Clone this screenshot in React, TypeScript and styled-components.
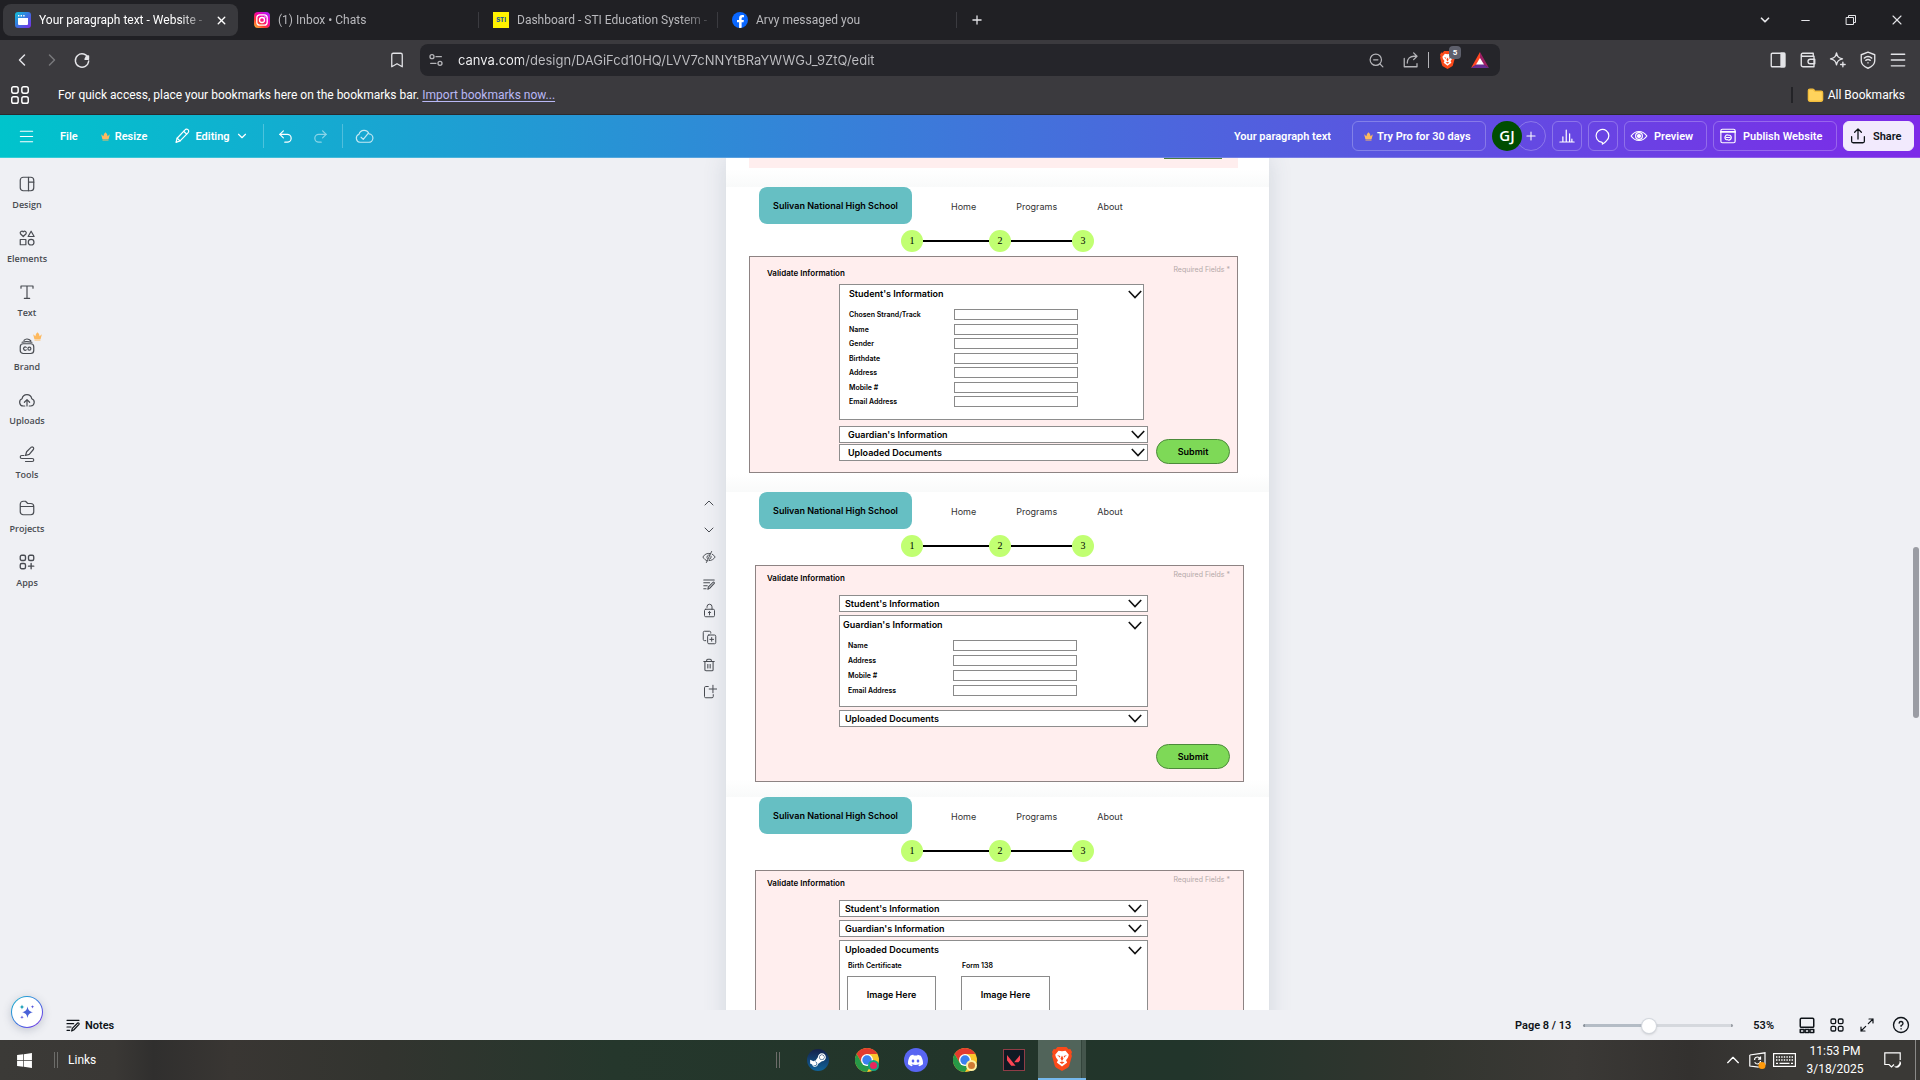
import React from 'react';
import styled, { createGlobalStyle, css } from 'styled-components';
import {
  Bookmark, ChevronDown, ChevronLeft, ChevronRight, ChevronUp, Folder, Menu, Minus, Plus,
  Redo2, Trash2, Undo2, X, ZoomOut,
} from 'lucide-react';
import { SiDiscord, SiValorant } from 'react-icons/si';
import { FaFacebookF, FaSteamSymbol, FaWindows } from 'react-icons/fa';

const chromeFont = 'Roboto, "Open Sans", sans-serif';
const canvaFont = 'Roboto, "Noto Sans", sans-serif';
const designFont = 'Inter, "Liberation Sans", sans-serif';

const Global = createGlobalStyle`
  *, *::before, *::after { box-sizing: border-box; }
  body { margin: 0; font-family: ${chromeFont}; background: #eff0f4; overflow: hidden; }
  button { border: 0; background: none; padding: 0; margin: 0; font: inherit; color: inherit; cursor: pointer; }
  input { font: inherit; margin: 0; }
  a { color: inherit; text-decoration: none; }
  svg { display: block; flex: none; }
`;

/* ---------- icons ---------- */

type IconProps = { size?: number; width?: number; height?: number; box?: string; weight?: number; children: React.ReactNode };
const Icon = ({ size = 18, width, height, box = '0 0 24 24', weight = 1.6, children }: IconProps) => (
  <svg width={width ?? size} height={height ?? size} viewBox={box} fill="none" stroke="currentColor"
    strokeWidth={weight} strokeLinecap="round" strokeLinejoin="round" aria-hidden="true">{children}</svg>
);

const Crown = ({ size = 9 }: { size?: number }) => (
  <svg width={size} height={size} viewBox="0 0 12 12" fill="#fdb95f" aria-hidden="true">
    <path d="M0.200 3 3.200 5.800 4 2.600 6 0.200 8 2.600 8.800 5.800 11.800 3 10.200 9.200H1.800ZM2 10h8v1.400H2Z" />
  </svg>
);

const Reload = () => (
  <Icon size={20} weight={1.7}><path d="M19.6 10A8 8 0 1 0 20 13.2" /><path d="M19.8 7.2v4h-4.2l1.6-3.4Z" fill="currentColor" /></Icon>
);
const SiteInfo = () => (
  <Icon size={16} weight={2}><circle cx="6" cy="7" r="3" /><path d="M12 7h8M4 17h8" /><circle cx="18" cy="17" r="3" /></Icon>
);
const ShareArrow = () => (
  <Icon size={18} weight={1.7}><path d="M3 10v11h17v-4" /><path d="M7 16c0-6 4-9 9-9h3M15.500 2.500 20 7l-4.500 4.500" /></Icon>
);
const SidePanel = () => (
  <Icon size={18} weight={1.8}><rect x="3" y="3" width="18" height="18" rx="1.500" /><path d="M16 3h5v18h-5Z" fill="currentColor" /></Icon>
);
const Wallet = () => (
  <Icon size={18} weight={1.8}><path d="M3 5v13.500A2.500 2.500 0 0 0 5.500 21H20V7H5a2 2 0 0 1-2-2c0-1 .8-2 2-2h14v4" /><path d="M21 11h-6a3 3 0 0 0 0 6h6Z" /></Icon>
);
const Sparkle = () => (
  <Icon size={18} weight={1.8}><path d="M10 2.500c1 5 2.500 6.500 8 8-5.500 1.500-7 3-8 8-1-5-2.500-6.500-8-8 5.500-1.500 7-3 8-8ZM18.500 15v6M15.500 18h6" /></Icon>
);
const Vpn = () => (
  <Icon size={18} weight={1.8}><path d="M12 1.500 21 5v8c0 5-4 8-9 10-5-2-9-5-9-10V5Z" /><path d="M7 9.500c3-2.500 7-2.500 10 0M9 12.500c2-1.500 4-1.500 6 0M12 15.500v.4" /></Icon>
);
const Bat = () => (
  <svg width="18" height="16" viewBox="0 0 18 16" aria-hidden="true">
    <path d="M9 0 0 16 9 10.500Z" fill="#ff4724" /><path d="M9 0 18 16 9 10.500Z" fill="#9e1f63" />
    <path d="M0 16h18L9 10Z" fill="#662d91" /><path d="M9 6 5 12.500h8Z" fill="#fff" />
  </svg>
);
const BraveLion = ({ width, height }: { width: number; height: number }) => (
  <svg width={width} height={height} viewBox="0 0 20 24" preserveAspectRatio="none" aria-hidden="true">
    <path d="M5.500 0h9l2 2.300 1.800-.3L20 5l-.7 2 .6 2-2.600 9.600a4 4 0 0 1-1.600 2.200L10 24l-5.700-3.200a4 4 0 0 1-1.600-2.200L.1 9l.6-2L0 5l1.700-3 1.800.3Z" fill="#fb4a1a" />
    <path d="M10 4.300 13.500 3.800 16.800 7.800 16 10.500l-2 2.800 1.200 2.200-5.200 4-5.200-4L6 13.300l-2-2.800L3.200 7.800 6.500 3.800Z" fill="#fff" />
    <path d="m5.200 8 3 1-.2 1.800ZM14.800 8l-3 1 .2 1.800ZM8.500 11.500 10 14l1.500-2.500L10 8.500ZM7.500 15.300 10 14.600l2.500.7L10 17Z" fill="#fb4a1a" />
  </svg>
);
const Grid4 = ({ size = 18, plus = false, weight = 2 }: { size?: number; plus?: boolean; weight?: number }) => (
  <Icon size={size} weight={weight}>
    <rect x="3" y="3" width="7" height="7" rx="2" /><rect x="14" y="3" width="7" height="7" rx="2" />
    <rect x="3" y="14" width="7" height="7" rx="2" />
    {plus ? <path d="M17.500 14v7M14 17.500h7" /> : <rect x="14" y="14" width="7" height="7" rx="2" />}
  </Icon>
);
const Pencil = () => (
  <Icon size={18}><path d="M4 20.500 5.500 15 16 3.800a2.400 2.400 0 0 1 4.200 3.700L9.500 18.500Z" /><path d="m14.500 6 3.700 3.500M5.500 15l4 3.500" /></Icon>
);
const NotesIcon = ({ size = 16 }: { size?: number }) => (
  <Icon size={size} weight={1.8}><path d="M3 5h18M3 10h10M3 15h6M3 20h4" /><path d="m10 21 1-4 8-8c1-1 3 .8 2 2l-8 8.500Z" /></Icon>
);
const CloudCheck = () => (
  <Icon size={20} weight={1.4}><path d="M7 19.500a5 5 0 0 1-1-9.600A6.300 6.300 0 0 1 18 9.500a5 5 0 0 1-.6 10Z" /><path d="m8.500 13.500 2.600 2.500L17 8.800" /></Icon>
);
const ChartIcon = () => (
  <Icon size={18}><path d="M2.500 20h19M6.500 20v-7M11 20V4M15.500 20V9M18.500 20v-4" /></Icon>
);
const Bubble = () => (
  <Icon size={18}><path d="M10 20.200A8.500 8.500 0 1 1 16.500 18.500C15 20.500 13 22 11 22.800c.6-1 .6-2-1-2.600Z" /></Icon>
);
const Eye = () => (
  <Icon size={18}><path d="M1.500 12C7 4 17 4 22.500 12 17 20 7 20 1.500 12Z" /><circle cx="12" cy="12" r="4.500" /><circle cx="12" cy="12" r="2" fill="currentColor" /></Icon>
);
const WebsiteIcon = () => (
  <Icon size={18}><rect x="2.500" y="3" width="19" height="18" rx="2" /><path d="M2.500 6.500h19" strokeWidth="2.400" /><path d="M12.500 11a3 3 0 1 0-2.500 6h1M11.500 17a3 3 0 1 0 3-6H13" /><path d="M9.500 14h5" /></Icon>
);
const Upload = () => (
  <Icon size={18} weight={1.7}><path d="M3.500 13v6a2 2 0 0 0 2 2h13a2 2 0 0 0 2-2v-6M12 16V3M7.500 7 12 2.500 16.500 7" /></Icon>
);
const DesignIcon = () => (<Icon><rect x="3" y="3" width="18" height="18" rx="4" /><path d="M14 3v18M14 9.500h7" /></Icon>);
const ElementsIcon = () => (
  <Icon><path d="M7 10 3.200 6.300a2.300 2.300 0 0 1 3.800-2.500 2.300 2.300 0 0 1 3.800 2.500ZM17.500 3 21.500 10h-8ZM3 14h7.500v7H3Z" /><circle cx="17.500" cy="17.500" r="3.800" /></Icon>
);
const TextIcon = () => (<Icon><path d="M4 7V4h16v3M12 4v16.500M8.500 20.500h7" /></Icon>);
const BrandIcon = () => (
  <Icon><rect x="3" y="9" width="18" height="13" rx="4" /><path d="M5.500 7c3-1 9-1 13 0M8 4.500C10 2 14 2 17 5" /><path d="M11 13.800a2.200 2.200 0 1 0 0 3.400" /><circle cx="15.200" cy="15.500" r="2" /></Icon>
);
const UploadsIcon = () => (
  <Icon><path d="M9 20H7a5 5 0 0 1-1.500-9.700 6.500 6.500 0 0 1 12.800 0A5 5 0 0 1 17 20h-2M12 20v-8M8.500 15 12 11.500l3.500 3.500" /></Icon>
);
const ToolsIcon = () => (
  <Icon><path d="m10 14 1.500-5L17 3.500a2 2 0 0 1 3.500 2.500L15 12.500Z" /><path d="M8 14H5a2 2 0 0 0 0 4h14a1.500 1.500 0 0 1 0 4h-9" /></Icon>
);
const ProjectsIcon = () => (
  <Icon><path d="M3 7a4 4 0 0 1 4-4h3l3 3h4a4 4 0 0 1 4 4v7a4 4 0 0 1-4 4H7a4 4 0 0 1-4-4ZM3 10h18" /></Icon>
);
const HideIcon = () => (
  <Icon size={14}><path d="M9 18.500C6 17.500 3.500 15.500 1.500 12 4.500 7 9 5 14 6M17.500 7.200c2 1 3.600 2.600 5 4.800-2.500 4-6 6.200-10.500 6.200M16.500 2.500 7.500 21.500M13 8.500a4 4 0 0 0-4 6M15.500 10.500a4 4 0 0 1-3 5.500" /></Icon>
);
const LockIcon = () => (
  <Icon size={15}><rect x="4" y="10" width="16" height="12" rx="2" /><path d="M8 7V6a4 4 0 0 1 8 0v4M12 19v-5M10 15.500l2-2 2 2" /></Icon>
);
const CopyIcon = () => (
  <Icon size={15}><path d="M6 17H4a2 2 0 0 1-2-2V4a2 2 0 0 1 2-2h8a2 2 0 0 1 2 2v1" /><rect x="9" y="8" width="13" height="14" rx="2" /><path d="M15.500 12v6M12.500 15h6" /></Icon>
);
const AddPageIcon = () => (
  <Icon size={15}><path d="M10 4H6a2 2 0 0 0-2 2v14a2 2 0 0 0 2 2h10a2 2 0 0 0 2-2v-3M17.500 2v12M11.500 8h12" /></Icon>
);
const PagesIcon = () => (
  <Icon size={18} weight={2}><rect x="3" y="3" width="18" height="12" rx="1.500" /><rect x="3" y="18" width="5" height="4" /><rect x="9.500" y="18" width="5" height="4" /><rect x="16" y="18" width="5" height="4" /></Icon>
);
const ExpandIcon = () => (
  <Icon size={16} weight={1.8}><path d="M15 3h6v6M21 3l-7 7M9 21H3v-6M3 21l7-7" /></Icon>
);
const HelpIcon = () => (
  <Icon size={18} weight={1.8}><circle cx="12" cy="12" r="10" /><path d="M9.500 9.500a2.600 2.600 0 1 1 2.600 3v1.300M12.100 17v.2" /></Icon>
);
const AiStars = () => (
  <svg width="16" height="16" viewBox="0 0 16 16" aria-hidden="true">
    <path d="M8.500 2.500c.8 3.800 1.900 4.900 5.500 5.700-3.600.8-4.700 1.900-5.500 5.700-.8-3.800-1.900-4.900-5.500-5.700 3.600-.8 4.700-1.900 5.500-5.700Z" fill="#4a62d8" />
    <path d="M3 .4c.4 1.700.9 2.200 2.600 2.600C3.900 3.400 3.400 3.900 3 5.600 2.600 3.900 2.100 3.400.4 3 2.100 2.600 2.600 2.100 3 .4Z" fill="#1ba0b8" />
    <path d="M13.500 1c.3 1.200.6 1.500 1.800 1.800-1.200.3-1.500.6-1.800 1.800-.3-1.200-.6-1.500-1.800-1.800 1.200-.3 1.500-.6 1.800-1.800ZM3 11.400c.3 1.200.6 1.500 1.800 1.800-1.200.3-1.500.6-1.800 1.800-.3-1.200-.6-1.500-1.800-1.800 1.200-.3 1.500-.6 1.800-1.800Z" fill="#5a58dd" />
  </svg>
);
const Caret = () => (
  <svg width="14" height="9" viewBox="0 0 14 9" fill="none" stroke="#111" strokeWidth="1.600" aria-hidden="true"><path d="m.8 1 6.200 6.600L13.200 1" /></svg>
);
const CanvaFav = () => (
  <svg width="16" height="16" viewBox="0 0 16 16" aria-hidden="true">
    <defs><linearGradient id="cf" x1="0" y1="0" x2="1" y2="1"><stop stopColor="#10c5d8" /><stop offset=".5" stopColor="#3b72df" /><stop offset="1" stopColor="#7d2ae8" /></linearGradient></defs>
    <rect width="16" height="16" rx="3" fill="url(#cf)" /><path d="M3 6h10v6a1 1 0 0 1-1 1H4a1 1 0 0 1-1-1Z" fill="#fff" /><path d="M3 3.800h1.400M5.600 3.800H7M8.200 3.800h1.400" stroke="#fff" strokeWidth="1.400" />
  </svg>
);
const InstaFav = () => (
  <svg width="16" height="16" viewBox="0 0 16 16" fill="none" aria-hidden="true">
    <defs><linearGradient id="ig" x1="0" y1="1" x2=".8" y2="0"><stop stopColor="#ffc83a" /><stop offset=".35" stopColor="#ff3a2e" /><stop offset=".65" stopColor="#f500a8" /><stop offset="1" stopColor="#b31cf5" /></linearGradient></defs>
    <rect width="16" height="16" rx="4" fill="url(#ig)" /><rect x="2.800" y="2.800" width="10.400" height="10.400" rx="3" stroke="#fff" strokeWidth="1.300" />
    <circle cx="8" cy="8" r="2.500" stroke="#fff" strokeWidth="1.300" /><circle cx="11" cy="5" r=".7" fill="#fff" />
  </svg>
);
const Chrome = () => (
  <svg width="24" height="24" viewBox="0 0 24 24" aria-hidden="true">
    <circle cx="12" cy="12" r="12" fill="#fcc62d" /><path d="M12 0a12 12 0 0 1 10.400 6H12l-5.200 9L1.600 6A12 12 0 0 1 12 0Z" fill="#e33b2e" />
    <path d="M1.600 6a12 12 0 0 0 10.400 18l5.200-9H6.800Z" fill="#279847" /><circle cx="12" cy="12" r="6" fill="#fff" /><circle cx="12" cy="12" r="4.700" fill="#3b80ee" />
  </svg>
);
const TraySync = () => (
  <svg width="17" height="17" viewBox="0 0 17 17" fill="none" stroke="#fff" strokeWidth="1.200" aria-hidden="true">
    <path d="M.8 3 16 .8v12M.8 3v11l9 1.200M5.500 8c0-2 1.500-3 3-3s2.200.8 2.800 1.800M11.500 4.500v2.600H9M11.500 9c0 2-1.500 3-3 3s-2.200-.8-2.800-1.800" /><circle cx="13" cy="13.500" r="3.500" fill="#ff9a0a" stroke="none" />
  </svg>
);
const Keyboard = () => (
  <svg width="23" height="14" viewBox="0 0 23 14" fill="none" stroke="#fff" aria-hidden="true">
    <rect x=".6" y=".6" width="21.800" height="12.800" strokeWidth="1.200" /><path d="M3 4h17M3 7h17" strokeDasharray="1.400 1.200" strokeWidth="1.400" /><path d="M3 10.300h2M6.500 10.300h10M18 10.300h2" strokeWidth="1.200" />
  </svg>
);
const ActionCenter = () => (
  <svg width="17" height="17" viewBox="0 0 17 17" fill="none" stroke="#fff" strokeWidth="1.200" aria-hidden="true">
    <path d="M10 12.500 7.500 15 5 12.500H.8V.8h15.400V8" /><path d="M15.500 8.500a4 4 0 1 1-5.500 6 5 5 0 0 0 5.500-6Z" fill="#fff" stroke="none" />
  </svg>
);

/* ---------- browser chrome ---------- */

const Screen = styled.div`height: 100vh; display: flex; flex-direction: column; overflow: hidden;`;
const TabStrip = styled.div`
  height: 40px; flex: none; display: flex; align-items: center; padding: 0 3px; background: #202024; color: #b9b9bd; font-size: 12px;
`;
const Tab = styled.div<{ $active?: boolean }>`
  width: 235px; height: 32px; padding: 0 4px 0 12px; border-radius: 8px; display: flex; align-items: center; gap: 8px;
  ${p => p.$active && css`background: #39393d; color: #fff; padding-right: 10px;`}
`;
const TabTitle = styled.span`
  flex: 1; white-space: nowrap; overflow: hidden; mask-image: linear-gradient(90deg, #000 84%, transparent 102%);
`;
const TabRule = styled.i<{ $hidden?: boolean }>`
  width: 1px; height: 16px; margin: 0 2px 0 1px; background: ${p => (p.$hidden ? 'transparent' : '#3b3b40')};
`;
const StiFav = styled.span`
  width: 16px; height: 16px; background: #fff200; color: #16579b; font: 800 6px/16px ${designFont}; text-align: center; flex: none;
`;
const FbFav = styled.span`
  width: 16px; height: 16px; border-radius: 50%; background: #0866ff; color: #fff; display: flex; justify-content: center; align-items: flex-end; overflow: hidden; flex: none;
`;
const ChromeButton = styled.button<{ $w?: number; $dim?: boolean }>`
  width: ${p => p.$w ?? 30}px; height: 28px; display: flex; align-items: center; justify-content: center; flex: none;
  color: ${p => (p.$dim ? '#78787c' : '#e4e4e8')};
`;
const Spacer = styled.span`flex: 1;`;
const NavBar = styled.div`
  height: 40px; flex: none; display: flex; align-items: center; background: #3b3a3e; padding: 0 7px; color: #e4e4e8;
`;
const NavSide = styled.div<{ $end?: boolean }>`
  flex: 1; display: flex; align-items: center; justify-content: ${p => (p.$end ? 'flex-end' : 'flex-start')};
`;
const AddressBar = styled.div`
  width: 1080px; height: 32px; border-radius: 8px; background: #25252a; display: flex; align-items: center; padding: 0 11px 0 8px; gap: 14px; color: #b4b4b8;
`;
const Url = styled.input`
  flex: 1; min-width: 0; border: 0; outline: 0; padding: 0; font: 13px/20px Inter, sans-serif; color: transparent;
  background: linear-gradient(90deg, #f6f6f8 65px, #bfbfc3 65px); background-clip: text; -webkit-background-clip: text;
`;
const AddressTool = styled.button`width: 20px; height: 20px; display: flex; align-items: center;`;
const AddressRule = styled.i`width: 1px; height: 16px; background: #b4b4b8; margin: 0 -6px;`;
const ShieldButton = styled.button`position: relative; width: 20px; height: 22px; display: flex; align-items: center; justify-content: center;`;
const ShieldCount = styled.span`
  position: absolute; top: -3px; left: 12px; width: 12px; height: 13px; border-radius: 4px; background: #5e606c; color: #fff; font: 700 8px/13px ${chromeFont}; text-align: center;
`;
const BookmarkBar = styled.div`
  height: 35px; flex: none; background: #3b3a3e; border-bottom: 1px solid #2b2a2e; display: flex; align-items: center; padding: 0 15px 4px 9px; color: #fff; font-size: 12px;
`;
const BookmarkHint = styled.span`margin-left: 27px;`;
const ImportLink = styled.a`margin-left: 3px; color: #b9b8f5; text-decoration: underline; text-underline-offset: 2px;`;
const BookmarkRule = styled.i`width: 2px; height: 16px; background: #232327; margin-right: 14px;`;
const AllBookmarks = styled.button`display: flex; align-items: center; gap: 4px;`;

/* ---------- editor bar ---------- */

const EditorBar = styled.header`
  height: 43px; flex: none; display: flex; align-items: center; padding: 0 6px 0 16px; color: #fff; font: 600 11px/14px ${canvaFont};
  background: linear-gradient(90deg, #00c4cc, #7d2ae8); border-bottom: 1px solid rgba(255, 255, 255, 0.2);
`;
const BarButton = styled.button<{ $gap?: number; $before?: number; $opacity?: number }>`
  display: flex; align-items: center; gap: ${p => p.$gap ?? 5}px; margin-left: ${p => p.$before ?? 0}px; opacity: ${p => p.$opacity ?? 1};
`;
const BarText = styled.span`padding-top: 1px;`;
const BarRule = styled.i<{ $before: number }>`width: 1px; height: 24px; background: rgba(255, 255, 255, 0.25); margin-left: ${p => p.$before}px;`;
const DocTitle = styled.input`
  width: 102px; margin-right: 15px; border: 0; padding: 1px 0 0; outline: 0; background: none; color: #fff; font: 600 11px/14px ${canvaFont}; text-align: right;
`;
const PillButton = styled.button<{ $w: number; $solid?: boolean; $left?: number; $gap?: number }>`
  width: ${p => p.$w}px; height: 30px; margin-left: 6px; border-radius: 6px; border: 1px solid ${p => (p.$solid ? '#f2eafd' : 'rgba(255,255,255,.25)')};
  display: flex; align-items: center; gap: ${p => p.$gap ?? 6}px; white-space: nowrap; padding-left: ${p => p.$left ?? 5}px;
  background: ${p => (p.$solid ? '#f2eafd' : 'transparent')}; color: ${p => (p.$solid ? '#0e1318' : '#fff')};
`;
const Avatar = styled.span`
  z-index: 1; width: 30px; height: 30px; margin-left: 6px; border-radius: 50%; background: #004d00; color: #fff; font: 600 15px/28px "Open Sans", sans-serif; text-align: center;
`;
const AddPerson = styled.button`
  width: 30px; height: 30px; margin-left: -6px; border-radius: 50%; border: 1px solid rgba(255, 255, 255, 0.25); display: flex; align-items: center; justify-content: center;
`;

/* ---------- editor body ---------- */

const Editor = styled.div`flex: 1; min-height: 0; display: flex; background: #eff0f4;`;
const Sidebar = styled.nav`width: 54px; flex: none; padding: 17px 0 12px; display: flex; flex-direction: column; align-items: center;`;
const SideItem = styled.button`
  position: relative; width: 54px; height: 54px; display: flex; flex-direction: column; align-items: center; gap: 6px; color: #494c52; font: 600 9px/12px "Open Sans", sans-serif;
`;
const SideCrown = styled.span`position: absolute; top: -5px; left: 33px;`;
const AiButton = styled.button`
  width: 32px; height: 32px; margin-top: auto; border-radius: 50%; border: 1px solid transparent; display: flex; align-items: center; justify-content: center;
  background: linear-gradient(#fff, #fff) padding-box, linear-gradient(135deg, #12b8cc, #3b78df, #7d2ae8) border-box; box-shadow: 0 2px 8px rgba(60, 70, 100, 0.25);
`;
const Workspace = styled.div`flex: 1; min-width: 0; display: flex; flex-direction: column;`;
const Stage = styled.main`
  flex: 1; min-height: 0; overflow: hidden; display: grid; grid-template-columns: 1fr 543px 1fr; padding-left: 21px;
`;
const PageTools = styled.div`padding: 331px 10px 0 0; display: flex; flex-direction: column; align-items: flex-end; color: #494c52;`;
const ToolButton = styled.button`width: 14px; height: 27px; display: flex; align-items: center; justify-content: center;`;
const ScrollSide = styled.div`display: flex; justify-content: flex-end; padding: 389px 1px 0 0;`;
const ScrollThumb = styled.i`width: 6px; height: 171px; border-radius: 3px; background: #9a9ca3;`;
const Sheets = styled.div`background: #fff; box-shadow: 0 0 22px rgba(64, 87, 109, 0.16); font-family: ${designFont}; color: #000; height: max-content;`;

const edge = css`background: linear-gradient(to top, #f9fafa, #fff 18px);`;
const PreviousSheet = styled.div`height: 29px; padding: 0 31px 0 23px; ${edge}`;
const PreviousPanel = styled.div`height: 10px; background: #ffeeee; display: flex; justify-content: flex-end; padding-right: 16px;`;
const PreviousSubmit = styled.i`width: 58px; height: 1px; background: #4c7d3d;`;
const Sheet = styled.section`height: 305px; display: flex; flex-direction: column; ${edge}`;
const SiteHeader = styled.header`display: flex; align-items: center; padding-left: 33px;`;
const SchoolName = styled.h2`
  width: 153px; height: 37px; margin: 0; border-radius: 8px; background: #66bfc3; font-size: 9px; line-height: 37px; font-weight: 600; text-align: center; white-space: nowrap;
`;
const SiteNav = styled.nav`display: flex; gap: 40px; margin: 3px 0 0 39px; font-size: 9px; line-height: 12px; color: #333;`;
const Steps = styled.ol`list-style: none; margin: 6px 0 0; padding: 0 0 0 175px; display: flex; align-items: center;`;
const Step = styled.li`width: 22px; height: 22px; border-radius: 50%; background: #c1ff72; font: 10px/22px "Liberation Serif", serif; text-align: center;`;
const StepLine = styled.li<{ $w: number }>`width: ${p => p.$w}px; height: 2px; background: #000;`;

const FormBox = styled.div<{ $first?: boolean }>`
  width: 489px; height: 217px; background: #ffeeee; border: 1px solid #8d8383;
  margin: ${p => (p.$first ? '4px 0 0 23px' : '8px 0 0 29px')};
  padding: ${p => (p.$first ? '0 7px 8px 17px' : '0 13px 12px 11px')};
  display: flex; flex-direction: column; flex: none;
`;
const FormHead = styled.div<{ $first?: boolean }>`
  display: flex; justify-content: space-between; align-items: flex-start; line-height: 10px; flex: none;
  height: ${p => (p.$first ? 27 : 29)}px; padding-top: ${p => (p.$first ? 8 : 4)}px;
`;
const FormTitle = styled.h3`margin: 0; padding-top: 3px; font-size: 8px; font-weight: 600; line-height: 10px;`;
const Required = styled.span`font-size: 7px; color: #b3a8a8;`;
const FormBody = styled.div`flex: 1; min-height: 0; display: flex; gap: 8px; padding-left: 72px;`;
const Accordion = styled.div<{ $tight?: boolean }>`width: 309px; display: flex; flex-direction: column; gap: ${p => (p.$tight ? 1 : 3)}px;`;
const Panel = styled.div<{ $h: number; $narrow?: boolean }>`
  width: ${p => (p.$narrow ? 305 : 309)}px; height: ${p => p.$h}px; flex: none; margin-bottom: ${p => (p.$narrow ? 5 : 0)}px; background: #fff; border: 1px solid #8d8d8d;
`;
const PanelHead = styled.button<{ $left?: number; $right?: number; $open?: boolean }>`
  width: 100%; height: ${p => (p.$open ? 18 : 15)}px; display: flex; align-items: center; justify-content: space-between; font-size: 9px; line-height: 12px; font-weight: 600;
  padding: 0 ${p => p.$right ?? 5}px 0 ${p => p.$left ?? 5}px;
`;
const Fields = styled.div<{ $h: number; $left: number }>`
  height: ${p => p.$h}px; margin-top: 6px; padding-left: ${p => p.$left}px; display: flex; flex-direction: column; justify-content: space-between;
`;
const Field = styled.label`display: flex; align-items: center; height: 11px; font-size: 7px; line-height: 11px; font-weight: 600;`;
const FieldName = styled.span`width: 105px;`;
const FieldInput = styled.input`width: 124px; height: 11px; border: 1px solid #8a8a8a; background: #fff; padding: 0 2px; outline: 0;`;
const Submit = styled.button`
  width: 74px; height: 25px; align-self: flex-end; border-radius: 13px; border: 1px solid #4c8a3a; background: #7ed957; font-size: 9px; font-weight: 600;
`;
const Documents = styled.div`display: flex; gap: 25px; padding: 1px 0 0 7px;`;
const Doc = styled.figure`margin: 0; width: 89px; display: flex; flex-direction: column; gap: 4px;`;
const DocName = styled.figcaption`font-size: 7px; line-height: 12px; font-weight: 600; padding-left: 1px;`;
const DocImage = styled.div`height: 38px; border: 1px solid #8a8a8a; font-size: 9px; line-height: 36px; font-weight: 600; text-align: center;`;

const Footer = styled.footer`
  height: 30px; flex: none; display: flex; align-items: center; padding: 0 0 0 11px; color: #0e1318; font: 600 11px/16px ${canvaFont};
`;
const NotesButton = styled.button`display: flex; align-items: center; gap: 4px;`;
const Zoom = styled.input`
  appearance: none; width: 150px; height: 16px; margin: 0 20px 0 12px; background: none;
  &::-webkit-slider-runnable-track { height: 3px; border-radius: 2px; background: linear-gradient(90deg, #8a929b 2px, #b4bcc5 2px, #b4bcc5 43%, #d5d8dd 43%, #d5d8dd 148px, #9a9fa6 148px); }
  &::-webkit-slider-thumb { appearance: none; width: 14px; height: 14px; margin-top: -5px; border-radius: 50%; background: #fff; box-shadow: 0 0 0 1px #d3d7dd, 0 1px 3px rgba(0, 0, 0, 0.25); }
`;
const ViewButtons = styled.div`display: flex; align-items: center; margin-left: 18px;`;
const ViewButton = styled.button<{ $w?: number }>`width: ${p => p.$w ?? 30}px; display: flex; justify-content: center;`;

/* ---------- taskbar ---------- */

const Taskbar = styled.div`
  height: 40px; flex: none; display: grid; grid-template-columns: 1fr auto 1fr; color: #fff; font: 12px/18px ${chromeFont};
  background: linear-gradient(90deg, #3b3a37 0, #3a3835 6%, #302f2e 8%, #393633 12%, #32342f 20%, #25372c 32%, #22352a 50%, #22352b 62%, #32352f 74%, #3b3936 82%, #33312f 88%, #3a3936 93%, #3a3936 100%);
`;
const TaskLeft = styled.div`display: flex; align-items: center; padding-left: 16px;`;
const Grip = styled.i<{ $before?: number; $after: number }>`
  width: 4px; height: 16px; border: solid #6d6d6a; border-width: 0 1px; margin: 0 ${p => p.$after}px 0 ${p => p.$before ?? 0}px;
`;
const Apps = styled.div`display: flex; align-items: center; padding-right: 58px;`;
const AppButton = styled.button<{ $active?: boolean }>`
  position: relative; width: ${p => (p.$active ? 48 : 49)}px; height: 40px; display: flex; align-items: center; justify-content: center;
  ${p => p.$active && css`background: linear-gradient(90deg, #51645a 43px, #33443b 43px, #33443b 44px, #44554c 44px); border-bottom: 2px solid #76b9ed;`}
`;
const RoundIcon = styled.span<{ $bg: string; $size?: number }>`
  width: ${p => p.$size ?? 24}px; height: ${p => p.$size ?? 24}px; border-radius: 50%; background: ${p => p.$bg}; display: flex; align-items: center; justify-content: center; color: #fff;
`;
const ProfileBadge = styled.span<{ $fill: string; $ring: string }>`
  position: absolute; left: 26px; top: 20px; width: 11px; height: 11px; border-radius: 50%; background: ${p => p.$fill}; border: 2px solid ${p => p.$ring};
`;
const ValorantTile = styled.span`
  width: 22px; height: 22px; background: #0f1923; border: 1px solid #8f3d47; color: #fa4454; display: flex; align-items: center; justify-content: center;
`;
const Tray = styled.div`display: flex; align-items: center; justify-content: flex-end;`;
const TrayItem = styled.button<{ $w: number }>`width: ${p => p.$w}px; height: 40px; display: flex; align-items: center; justify-content: center;`;
const Clock = styled.time`width: 70px; text-align: center;`;
const DesktopEdge = styled.i`width: 5px; height: 40px; border-left: 1px solid #8a8a88;`;

/* ---------- content ---------- */

const sideItems: [string, () => React.JSX.Element][] = [
  ['Design', DesignIcon], ['Elements', ElementsIcon], ['Text', TextIcon], ['Brand', BrandIcon],
  ['Uploads', UploadsIcon], ['Tools', ToolsIcon], ['Projects', ProjectsIcon], ['Apps', () => <Grid4 plus weight={1.8} />],
];
const pageTools: [string, React.ReactNode][] = [
  ['Move up', <ChevronUp size={16} strokeWidth={1.5} />], ['Move down', <ChevronDown size={16} strokeWidth={1.5} />],
  ['Hide page', <HideIcon />], ['Add notes', <NotesIcon size={14} />], ['Lock page', <LockIcon />],
  ['Duplicate page', <CopyIcon />], ['Delete page', <Trash2 size={14} strokeWidth={1.8} />], ['Add page', <AddPageIcon />],
];
const studentFields = ['Chosen Strand/Track', 'Name', 'Gender', 'Birthdate', 'Address', 'Mobile #', 'Email Address'];
const guardianFields = ['Name', 'Address', 'Mobile #', 'Email Address'];

const Head = ({ title, left, right, open }: { title: string; left?: number; right?: number; open?: boolean }) => (
  <PanelHead type="button" aria-expanded={!!open} $left={left} $right={right} $open={open}><span>{title}</span><Caret /></PanelHead>
);
const Closed = ({ title, left, right }: { title: string; left?: number; right?: number }) => (
  <Panel $h={17}><Head title={title} left={left} right={right} /></Panel>
);
const FieldList = ({ names, height, left }: { names: string[]; height: number; left: number }) => (
  <Fields $h={height} $left={left}>
    {names.map(n => <Field key={n}><FieldName>{n}</FieldName><FieldInput type="text" /></Field>)}
  </Fields>
);
const SitePage = ({ first, submit = true, children }: { first?: boolean; submit?: boolean; children: React.ReactNode }) => (
  <Sheet>
    <SiteHeader>
      <SchoolName>Sulivan National High School</SchoolName>
      <SiteNav><a href="#home">Home</a><a href="#programs">Programs</a><a href="#about">About</a></SiteNav>
    </SiteHeader>
    <Steps><Step>1</Step><StepLine $w={66} /><Step>2</Step><StepLine $w={61} /><Step>3</Step></Steps>
    <FormBox $first={first}>
      <FormHead $first={first}><FormTitle>Validate Information</FormTitle><Required>Required Fields *</Required></FormHead>
      <FormBody><Accordion $tight={first}>{children}</Accordion>{submit && <Submit type="button">Submit</Submit>}</FormBody>
    </FormBox>
  </Sheet>
);

export default function App() {
  return (
    <Screen>
      <Global />
      <TabStrip>
        <Tab $active><CanvaFav /><TabTitle>Your paragraph text - Website -</TabTitle><X size={13} strokeWidth={2.6} /></Tab>
        <TabRule $hidden />
        <Tab><InstaFav /><TabTitle>(1) Inbox • Chats</TabTitle></Tab>
        <TabRule />
        <Tab><StiFav>STI</StiFav><TabTitle>Dashboard - STI Education System -</TabTitle></Tab>
        <TabRule />
        <Tab><FbFav><FaFacebookF size={13} /></FbFav><TabTitle>Arvy messaged you</TabTitle></Tab>
        <TabRule />
        <ChromeButton $w={36} aria-label="New tab"><Plus size={14} strokeWidth={2.2} /></ChromeButton>
        <Spacer />
        <ChromeButton $w={40} aria-label="Search tabs"><ChevronDown size={14} strokeWidth={3} /></ChromeButton>
        <ChromeButton $w={40} aria-label="Minimize"><Minus size={13} strokeWidth={2} /></ChromeButton>
        <ChromeButton $w={52} aria-label="Restore">
          <Icon size={12} box="0 0 12 12" weight={1}><path d="M1.500 3.500h7v7h-7ZM3.500 3.500v-2h7v7h-2" /></Icon>
        </ChromeButton>
        <ChromeButton $w={40} aria-label="Close"><X size={16} strokeWidth={1.6} /></ChromeButton>
      </TabStrip>
      <NavBar>
        <NavSide>
          <ChromeButton aria-label="Back"><ChevronLeft size={20} strokeWidth={1.8} /></ChromeButton>
          <ChromeButton $dim aria-label="Forward"><ChevronRight size={20} strokeWidth={1.8} /></ChromeButton>
          <ChromeButton aria-label="Reload"><Reload /></ChromeButton>
          <Spacer />
          <ChromeButton $w={46} aria-label="Bookmark"><Bookmark size={18} strokeWidth={1.7} /></ChromeButton>
        </NavSide>
        <AddressBar>
          <SiteInfo />
          <Url aria-label="Address" defaultValue="canva.com/design/DAGiFcd10HQ/LVV7cNNYtBRaYWWGJ_9ZtQ/edit" />
          <AddressTool aria-label="Zoom out"><ZoomOut size={17} strokeWidth={1.7} /></AddressTool>
          <ShareArrow />
          <AddressRule />
          <ShieldButton aria-label="Shields"><BraveLion width={15} height={18} /><ShieldCount>5</ShieldCount></ShieldButton>
          <Bat />
        </AddressBar>
        <NavSide $end>
          <ChromeButton aria-label="Side panel"><SidePanel /></ChromeButton>
          <ChromeButton aria-label="Wallet"><Wallet /></ChromeButton>
          <ChromeButton aria-label="Assistant"><Sparkle /></ChromeButton>
          <ChromeButton aria-label="VPN"><Vpn /></ChromeButton>
          <ChromeButton aria-label="Menu"><Menu size={20} strokeWidth={1.7} /></ChromeButton>
        </NavSide>
      </NavBar>
      <BookmarkBar>
        <Grid4 size={22} weight={1.6} />
        <BookmarkHint>For quick access, place your bookmarks here on the bookmarks bar.</BookmarkHint>
        <ImportLink href="#import">Import bookmarks now...</ImportLink>
        <Spacer />
        <BookmarkRule />
        <AllBookmarks><Folder size={17} fill="#ffd35c" stroke="#f3bd3c" />All Bookmarks</AllBookmarks>
      </BookmarkBar>
      <EditorBar>
        <BarButton aria-label="Main menu"><Icon size={21} weight={1.3}><path d="M5 6h14M5 12h14M5 18h14" /></Icon></BarButton>
        <BarButton $before={23}><BarText>File</BarText></BarButton>
        <BarButton $before={23}><Crown /><BarText>Resize</BarText></BarButton>
        <BarButton $before={25}><Pencil /><BarText>Editing</BarText><ChevronDown size={14} strokeWidth={2} /></BarButton>
        <BarRule $before={14} />
        <BarButton $before={13} aria-label="Undo"><Undo2 size={17} strokeWidth={1.7} /></BarButton>
        <BarButton $before={18} $opacity={0.5} aria-label="Redo"><Redo2 size={17} strokeWidth={1.7} /></BarButton>
        <BarRule $before={13} />
        <BarButton $before={11} $opacity={0.75} aria-label="Saved"><CloudCheck /></BarButton>
        <Spacer />
        <DocTitle aria-label="Design title" defaultValue="Your paragraph text" />
        <PillButton $w={134} $left={11} $gap={4}><Crown /><BarText>Try Pro for 30 days</BarText></PillButton>
        <Avatar>GJ</Avatar>
        <AddPerson aria-label="Add people"><Plus size={14} strokeWidth={1.8} /></AddPerson>
        <PillButton $w={30} aria-label="Insights"><ChartIcon /></PillButton>
        <PillButton $w={30} aria-label="Comment"><Bubble /></PillButton>
        <PillButton $w={83}><Eye /><BarText>Preview</BarText></PillButton>
        <PillButton $w={124}><WebsiteIcon /><BarText>Publish Website</BarText></PillButton>
        <PillButton $w={71} $solid><Upload /><BarText>Share</BarText></PillButton>
      </EditorBar>
      <Editor>
        <Sidebar>
          {sideItems.map(([name, Glyph]) => (
            <SideItem key={name}><Glyph />{name === 'Brand' && <SideCrown><Crown /></SideCrown>}<span>{name}</span></SideItem>
          ))}
          <AiButton aria-label="Quick actions"><AiStars /></AiButton>
        </Sidebar>
        <Workspace>
          <Stage>
            <PageTools>{pageTools.map(([n, g]) => <ToolButton key={n} aria-label={n}>{g}</ToolButton>)}</PageTools>
            <Sheets>
              <PreviousSheet><PreviousPanel><PreviousSubmit /></PreviousPanel></PreviousSheet>
              <SitePage first>
                <Panel $h={136} $narrow>
                  <Head title="Student's Information" left={9} right={1} open />
                  <FieldList names={studentFields} height={98} left={9} />
                </Panel>
                <Closed title="Guardian's Information" left={8} right={2} />
                <Closed title="Uploaded Documents" left={8} right={2} />
              </SitePage>
              <SitePage>
                <Closed title="Student's Information" />
                <Panel $h={92}>
                  <Head title="Guardian's Information" left={3} open />
                  <FieldList names={guardianFields} height={56} left={8} />
                </Panel>
                <Closed title="Uploaded Documents" />
              </SitePage>
              <SitePage submit={false}>
                <Closed title="Student's Information" />
                <Closed title="Guardian's Information" />
                <Panel $h={120}>
                  <Head title="Uploaded Documents" left={5} open />
                  <Documents>
                    {['Birth Certificate', 'Form 138'].map(n => <Doc key={n}><DocName>{n}</DocName><DocImage>Image Here</DocImage></Doc>)}
                  </Documents>
                </Panel>
              </SitePage>
            </Sheets>
            <ScrollSide><ScrollThumb /></ScrollSide>
          </Stage>
          <Footer>
            <NotesButton><NotesIcon /><BarText>Notes</BarText></NotesButton>
            <Spacer />
            <BarText>Page 8 / 13</BarText>
            <Zoom type="range" aria-label="Zoom" min={0} max={100} defaultValue={43} />
            <BarText>53%</BarText>
            <ViewButtons>
              <ViewButton aria-label="Pages"><PagesIcon /></ViewButton>
              <ViewButton aria-label="Grid view"><Grid4 size={16} /></ViewButton>
              <ViewButton aria-label="Full screen"><ExpandIcon /></ViewButton>
              <ViewButton $w={38} aria-label="Help"><HelpIcon /></ViewButton>
            </ViewButtons>
          </Footer>
        </Workspace>
      </Editor>
      <Taskbar>
        <TaskLeft>
          <FaWindows size={17} />
          <Grip $before={21} $after={10} />
          <span>Links</span>
        </TaskLeft>
        <Apps>
          <Grip $after={13} />
          <AppButton aria-label="Steam"><RoundIcon $bg="linear-gradient(#14204a, #10639a)" $size={22}><FaSteamSymbol size={18} /></RoundIcon></AppButton>
          <AppButton aria-label="Chrome"><Chrome /><ProfileBadge $fill="#e8265e" $ring="#12a37f" /></AppButton>
          <AppButton aria-label="Discord"><RoundIcon $bg="#5865f2"><SiDiscord size={15} /></RoundIcon></AppButton>
          <AppButton aria-label="Chrome, second profile"><Chrome /><ProfileBadge $fill="#d07a35" $ring="#fff0a0" /></AppButton>
          <AppButton aria-label="Valorant"><ValorantTile><SiValorant size={13} /></ValorantTile></AppButton>
          <AppButton $active aria-label="Brave"><BraveLion width={20} height={24} /></AppButton>
        </Apps>
        <Tray>
          <TrayItem $w={24} aria-label="Hidden icons"><Icon size={16} weight={2}><path d="m4 16 8-8 8 8" /></Icon></TrayItem>
          <TrayItem $w={24} aria-label="Updates"><TraySync /></TrayItem>
          <TrayItem $w={31} aria-label="Keyboard"><Keyboard /></TrayItem>
          <Clock>11:53 PM<br />3/18/2025</Clock>
          <TrayItem $w={45} aria-label="Notifications"><ActionCenter /></TrayItem>
          <DesktopEdge />
        </Tray>
      </Taskbar>
    </Screen>
  );
}
